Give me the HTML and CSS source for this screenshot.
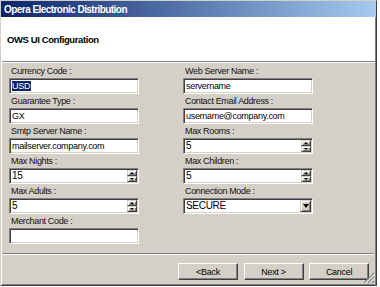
FILE: index.html
```html
<!DOCTYPE html>
<html lang="en">

<head>
	<meta charset="UTF-8">
	<title>Opera Electronic Distribution</title>
	<link rel="stylesheet" href="styles.css">
</head>

<body>
	<div class="window">
		<div class="titlebar">Opera Electronic Distribution</div>
		<header class="banner">OWS UI Configuration</header>
		<main class="content">
			<div class="form">
				<div class="field">
					<label>Currency Code :</label>
					<div class="box"><span class="value"><span class="selected">USD</span></span></div>
				</div>
				<div class="field">
					<label>Web Server Name :</label>
					<div class="box"><span class="value">servername</span></div>
				</div>
				<div class="field">
					<label>Guarantee Type :</label>
					<div class="box"><span class="value">GX</span></div>
				</div>
				<div class="field">
					<label>Contact Email Address :</label>
					<div class="box"><span class="value">username@company.com</span></div>
				</div>
				<div class="field">
					<label>Smtp Server Name :</label>
					<div class="box"><span class="value">mailserver.company.com</span></div>
				</div>
				<div class="field">
					<label>Max Rooms :</label>
					<div class="box"><span class="value big">5</span><span class="spinner"><i class="up"></i><i class="down"></i></span></div>
				</div>
				<div class="field">
					<label>Max Nights :</label>
					<div class="box"><span class="value big">15</span><span class="spinner"><i class="up"></i><i class="down"></i></span></div>
				</div>
				<div class="field">
					<label>Max Children :</label>
					<div class="box"><span class="value big">5</span><span class="spinner"><i class="up"></i><i class="down"></i></span></div>
				</div>
				<div class="field">
					<label>Max Adults :</label>
					<div class="box"><span class="value big">5</span><span class="spinner"><i class="up"></i><i class="down"></i></span></div>
				</div>
				<div class="field">
					<label>Connection Mode :</label>
					<div class="box"><span class="value big">SECURE</span><span class="drop"><i></i></span></div>
				</div>
				<div class="field">
					<label>Merchant Code :</label>
					<div class="box"><span class="value"></span></div>
				</div>
			</div>
		</main>
		<hr class="rule">
		<footer class="footer">
			<button class="btn">&lt;Back</button>
			<button class="btn">Next &gt;</button>
			<button class="btn">Cancel</button>
		</footer>
		<svg class="grip" width="12" height="12" viewBox="0 0 12 12">
			<path d="M11 1 L1 11 M11 5 L5 11 M11 9 L9 11" stroke="#808080" stroke-width="1.2" />
			<path d="M11 2.5 L2.5 11 M11 6.5 L6.5 11" stroke="#fff" stroke-width="0.8" />
		</svg>
	</div>
</body>

</html>
```

FILE: styles.css
```css
* {
	padding: 0;
	margin: 0;
	box-sizing: border-box;
}

body {
	background-color: #fff;
	font-family: "Liberation Sans", Arial, sans-serif;
	font-size: 9px;
	color: #000;
}

.window {
	position: relative;
	width: 377px;
	height: 286px;
	display: flex;
	flex-flow: column nowrap;
	background-color: #d4d0c8;
	border: 1px solid;
	border-color: #d4d0c8 #404040 #404040 #d4d0c8;
	box-shadow: inset 1px 1px #fff, inset -1px -1px #808080;
}

.titlebar {
	flex: 0 0 16px;
	display: flex;
	align-items: center;
	padding-left: 3px;
	background: linear-gradient(to right, #0a246a, #a6caf0);
	color: #fff;
	font-size: 10px;
	font-weight: bold;
	letter-spacing: -0.55px;
}

.banner {
	flex: 0 0 45px;
	margin: 0 1px;
	display: flex;
	align-items: center;
	padding: 0 5px;
	background-color: #fff;
	border-bottom: 1px solid #808080;
	font-size: 9.5px;
	font-weight: bold;
	letter-spacing: -0.4px;
}

.content {
	flex: 1 1 auto;
	margin: 0 1px;
	padding: 2px 7px 0 7px;
	border-top: 1px solid #fff;
}

.form {
	display: grid;
	grid-template-columns: 130px 130px;
	column-gap: 44px;
	row-gap: 1px;
}

.field label {
	display: block;
	height: 13px;
	line-height: 13px;
	padding-left: 2px;
	letter-spacing: -0.35px;
	color: #111;
}

.box {
	height: 16px;
	display: flex;
	align-items: center;
	background-color: #fff;
	border: 1px solid;
	border-color: #808080 #fff #fff #808080;
	box-shadow: inset 1px 1px #404040, inset -1px -1px #d4d0c8;
	padding: 1px;
	letter-spacing: -0.3px;
}

.value {
	flex: 1 1 auto;
	padding-left: 1px;
	line-height: 12px;
	white-space: nowrap;
	overflow: hidden;
}

.value.big {
	font-size: 10px;
}

.selected {
	background-color: #0a246a;
	color: #fff;
	padding: 0 1px 0 0;
}

.spinner {
	flex: 0 0 10px;
	align-self: stretch;
	display: flex;
	flex-flow: column nowrap;
}

.spinner i,
.drop {
	flex: 1 1 0;
	display: flex;
	align-items: center;
	justify-content: center;
	background-color: #d4d0c8;
	border: 1px solid;
	border-color: #d4d0c8 #404040 #404040 #d4d0c8;
	box-shadow: inset 1px 1px #fff, inset -1px -1px #808080;
}

.spinner i::before {
	content: "";
	display: block;
	border-left: 2.5px solid transparent;
	border-right: 2.5px solid transparent;
}

.spinner .up::before {
	border-bottom: 2.5px solid #000;
}

.spinner .down::before {
	border-top: 2.5px solid #000;
}

.drop {
	flex: 0 0 11px;
	align-self: stretch;
}

.drop i {
	display: block;
	border-left: 3.5px solid transparent;
	border-right: 3.5px solid transparent;
	border-top: 4px solid #000;
}

.rule {
	flex: 0 0 2px;
	margin: 0 2px;
	border: none;
	border-top: 1px solid #808080;
	border-bottom: 1px solid #fff;
}

.footer {
	flex: 0 0 30px;
	margin: 0 1px;
	display: flex;
	justify-content: flex-end;
	align-items: flex-start;
	gap: 5.5px;
	padding: 8px 6px 0 0;
}

.btn {
	width: 60px;
	height: 17px;
	font-family: inherit;
	font-size: 9px;
	letter-spacing: -0.3px;
	color: #000;
	background-color: #d4d0c8;
	border: 1px solid;
	border-color: #fff #404040 #404040 #fff;
	box-shadow: inset -1px -1px #808080;
}

.grip {
	position: absolute;
	right: 1px;
	bottom: 1px;
}
```
